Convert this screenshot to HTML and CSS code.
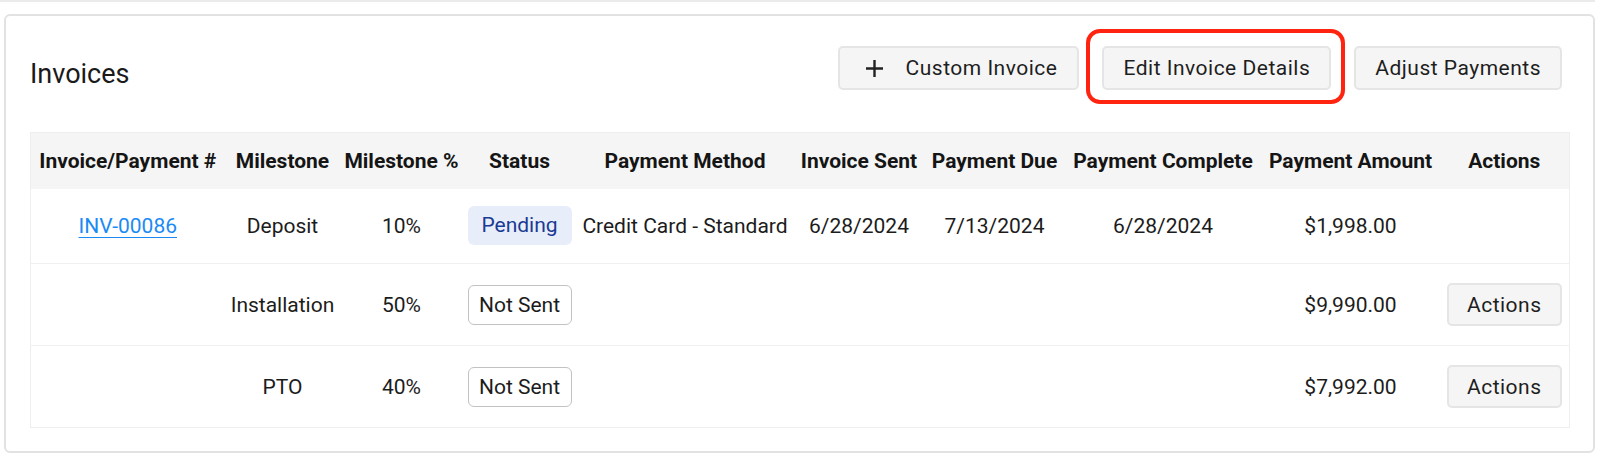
FILE: index.html
```html
<!DOCTYPE html>
<html lang="en">
<head>
<meta charset="utf-8">
<title>Invoices</title>
<link rel="stylesheet" href="styles.css">
</head>
<body>
<div class="prev-card"></div>
<section class="card">
  <div class="card-head">
    <h2 class="title">Invoices</h2>
    <div class="actions-bar">
      <button class="btn btn-icon" type="button">
        <svg class="plus" viewBox="0 0 19 19" width="19" height="19" aria-hidden="true"><path d="M9.5 1v17M1 9.5h17" stroke="#222" stroke-width="2.4" fill="none"/></svg>
        <span>Custom Invoice</span>
      </button>
      <div class="highlight">
        <button class="btn" type="button">Edit Invoice Details</button>
      </div>
      <button class="btn" type="button">Adjust Payments</button>
    </div>
  </div>
  <table class="inv-table">
    <colgroup>
      <col class="c1"><col class="c2"><col class="c3"><col class="c4"><col class="c5">
      <col class="c6"><col class="c7"><col class="c8"><col class="c9"><col class="c10">
    </colgroup>
    <thead>
      <tr>
        <th>Invoice/Payment #</th>
        <th>Milestone</th>
        <th>Milestone %</th>
        <th>Status</th>
        <th>Payment Method</th>
        <th>Invoice Sent</th>
        <th>Payment Due</th>
        <th>Payment Complete</th>
        <th>Payment Amount</th>
        <th>Actions</th>
      </tr>
    </thead>
    <tbody>
      <tr class="r1">
        <td><a class="inv-link" href="#">INV-00086</a></td>
        <td>Deposit</td>
        <td>10%</td>
        <td><span class="badge-pending">Pending</span></td>
        <td>Credit Card - Standard</td>
        <td>6/28/2024</td>
        <td>7/13/2024</td>
        <td>6/28/2024</td>
        <td>$1,998.00</td>
        <td></td>
      </tr>
      <tr>
        <td></td>
        <td>Installation</td>
        <td>50%</td>
        <td><span class="badge-notsent">Not Sent</span></td>
        <td></td>
        <td></td>
        <td></td>
        <td></td>
        <td>$9,990.00</td>
        <td><button class="btn btn-row" type="button">Actions</button></td>
      </tr>
      <tr>
        <td></td>
        <td>PTO</td>
        <td>40%</td>
        <td><span class="badge-notsent">Not Sent</span></td>
        <td></td>
        <td></td>
        <td></td>
        <td></td>
        <td>$7,992.00</td>
        <td><button class="btn btn-row" type="button">Actions</button></td>
      </tr>
    </tbody>
  </table>
</section>
</body>
</html>
```

FILE: styles.css
```css
* { box-sizing: border-box; }
html, body { margin: 0; padding: 0; background: #ffffff; }
body {
  font-family: Roboto, "Liberation Sans", Arial, sans-serif;
  color: #1c1c1c;
  width: 1600px;
  height: 459px;
  overflow: hidden;
}
.prev-card {
  height: 2px;
  width: 1595px;
  background: #ebebeb;
}
.card {
  margin: 12px 0 0 4px;
  width: 1591px;
  height: 439px;
  border: 2px solid #e2e2e2;
  border-radius: 6px;
  padding: 30px 24px 0 24px;
  background: #fff;
}
.card-head {
  display: flex;
  align-items: flex-start;
  justify-content: space-between;
  height: 44px;
  padding-right: 7px;
}
.title {
  margin: 13px 0 0 0;
  font-size: 27px;
  line-height: 31px;
  font-weight: 400;
  color: #1a1a1a;
}
.actions-bar {
  display: flex;
  gap: 23px;
  align-items: center;
}
.btn {
  font-family: Roboto, "Liberation Sans", Arial, sans-serif;
  font-size: 21px;
  letter-spacing: 0.5px;
  color: #1e1e1e;
  height: 44px;
  padding: 0 19px;
  background: #f5f5f5;
  border: 2px solid #e5e5e5;
  border-radius: 5px;
  display: inline-flex;
  align-items: center;
  justify-content: center;
  white-space: nowrap;
  cursor: pointer;
}
.btn-icon { gap: 22px; padding: 0 20px 0 25px; }
.plus { display: block; }
.highlight { position: relative; }
.highlight::after {
  content: "";
  position: absolute;
  top: -17px; bottom: -14px; left: -16px; right: -14px;
  border: 4px solid #ff2410;
  border-radius: 14px;
  pointer-events: none;
}
.inv-table {
  margin-top: 42px;
  width: 1539px;
  table-layout: fixed;
  border-collapse: collapse;
  border: 1px solid #eeeeee;
  font-size: 21px;
}
.c1 { width: 194px; } .c2 { width: 116px; } .c3 { width: 122px; }
.c4 { width: 114px; } .c5 { width: 217px; } .c6 { width: 131px; }
.c7 { width: 140px; } .c8 { width: 197px; } .c9 { width: 178px; }
.c10 { width: 130px; }
.inv-table th {
  background: #f5f5f5;
  font-weight: 700;
  color: #151515;
  height: 56px;
  padding: 0;
  text-align: center;
  white-space: nowrap;
}
.inv-table td {
  text-align: center;
  padding: 0;
  height: 82px;
  border-top: 1px solid #f0f0f0;
  white-space: nowrap;
  color: #1c1c1c;
}
.inv-table tr.r1 td { height: 75px; border-top: none; }
.inv-link { color: #1b8af5; text-decoration: underline; text-underline-offset: 4px; text-decoration-thickness: 1px; }
.badge-pending {
  display: inline-block;
  background: #e8eef9;
  color: #1a3a94;
  border-radius: 6px;
  width: 104px;
  height: 39px;
  line-height: 39px;
}
.badge-notsent {
  display: inline-block;
  background: #fff;
  border: 1px solid #c2c2c2;
  border-radius: 6px;
  width: 104px;
  height: 40px;
  line-height: 38px;
}
.btn-row { width: 115px; height: 43px; padding: 0; }
```
